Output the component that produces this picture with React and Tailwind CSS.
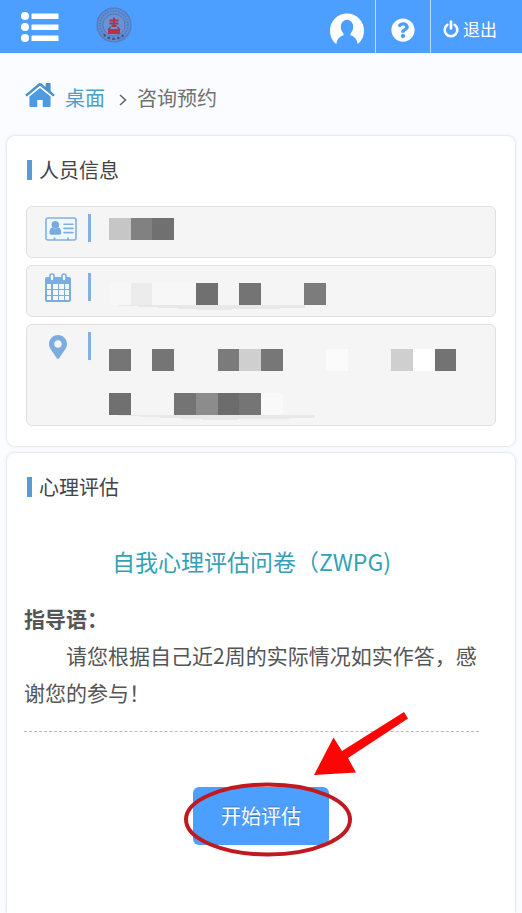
import React from "react";
import { FaQuestionCircle, FaMapMarkerAlt } from "react-icons/fa";

/* ================= ICONS ================= */

const ListIcon = () => (
  <svg viewBox="0 0 38 30" className="w-[38px] h-[30px]" fill="#fff" aria-hidden="true">
    {[4, 15, 26].map((y) => (
      <g key={y}>
        <circle cx="4" cy={y} r="4" />
        <rect x="10.500" y={y - 2.5} width="27" height="5.500" rx="0.500" />
      </g>
    ))}
  </svg>
);

const Emblem = () => (
  <svg viewBox="0 0 36 36" className="w-9 h-9" fill="none" aria-hidden="true">
    <circle cx="18" cy="18" r="17" fill="#5c8fd8" stroke="#5a78b4" strokeWidth="1.2" />
    <circle cx="18" cy="18" r="11" fill="#6b92d4" stroke="#5a78b4" strokeWidth="1" />
    <circle cx="18" cy="18" r="14" stroke="#5575b5" strokeWidth="1.6" strokeDasharray="1.2 1.6" />
    <path d="M8 27.500a13.800 13.800 0 0 0 20 0" stroke="#4a4a8c" strokeWidth="2.4" strokeDasharray="2.2 2.6" />
    <path d="M18 10.500v3M13.500 13.500h9M13.500 16.500h9M18 13v6M15.500 19h5" stroke="#a8364f" strokeWidth="1.900" />
    <path d="M12 22h12v5H12z" fill="#c62c40" />
    <path d="M14.500 20l-2.500 3M21.500 20l2.500 3" stroke="#8a3f6c" strokeWidth="1.4" />
  </svg>
);

const UserIcon = () => (
  <svg viewBox="0 0 36 34" className="w-9 h-[34px]" aria-hidden="true">
    <path
      fill="#fff"
      d="M7.3 32C3.2 29 1 24 1 18.5a17 17 0 1 1 34 0C35 24 32.8 29 28.7 32
      C28 27.6 26 24.6 21.4 23.2C21.2 22.4 21.4 21.6 22 20.9C23.4 19.5 24.2 17.4 24.2 14.6
      A6.2 6.8 0 0 0 11.8 14.6C11.8 17.4 12.6 19.5 14 20.9C14.6 21.6 14.8 22.4 14.6 23.2C10 24.6 8 27.6 7.3 32Z"
    />
  </svg>
);

const PowerIcon = () => (
  <svg viewBox="0 0 16 18" className="w-4 h-[18px]" fill="none" stroke="#fff" strokeLinecap="round" aria-hidden="true">
    <path d="M8 1.500v7" strokeWidth="2.600" />
    <path d="M4.400 4.800a6.300 6.300 0 1 0 7.200 0" strokeWidth="2.600" />
  </svg>
);

const HomeIcon = () => (
  <svg viewBox="0 0 30 26" className="w-[30px] h-[26px]" aria-hidden="true">
    <path fill="#4f9be2" d="M15 6L4.400 14.600v9.200c0 .6.4 1.100 1.100 1.100h6.800v-7h5.400v7h6.800c.7 0 1.100-.5 1.100-1.100v-9.200z" />
    <path
      fill="#4a93c9"
      d="M1.2 14.1L.5 13.300c-.2-.3-.2-.7.1-.9L13.200 1.700c1-.8 2.600-.8 3.600 0L20.600 4.900V1.600c0-.4.3-.7.7-.7h3.6c.4 0 .7.3.7.7v7.400l3.800 3.400c.3.2.3.6.1.9l-.7.8c-.3.3-.7.3-1 .1L15.400 4a.7.700 0 0 0-.8 0L2.200 14.200c-.3.2-.7.2-1-.1z"
    />
  </svg>
);

const IdCardIcon = () => (
  <svg viewBox="0 0 32 24" className="w-8 h-6" fill="none" aria-hidden="true">
    <rect x="1" y="1" width="30" height="22" rx="2" fill="#eef9ff" stroke="#84b0df" strokeWidth="1.600" />
    <circle cx="10.300" cy="7.800" r="3.800" fill="#78abdf" />
    <path d="M4.400 15.600c0-3.600 1.600-5.200 3.400-5.200 1.400 1.300 3.600 1.300 5 0 1.800 0 3.400 1.600 3.400 5.200 0 1.400-.8 2.200-1.900 2.200H6.300c-1.100 0-1.900-.8-1.900-2.200z" fill="#78abdf" />
    <path d="M19 7.200h9M19 11.400h9M19 15.600h9" stroke="#84b0df" strokeWidth="1.600" strokeLinecap="round" />
    <path d="M9.500 20.500V23M23 20.500V23" stroke="#84b0df" strokeWidth="1.800" />
  </svg>
);

const CalendarIcon = () => (
  <svg viewBox="0 0 26 29" className="w-[26px] h-[29px]" aria-hidden="true">
    <rect x="0" y="4" width="26" height="25" rx="2" fill="#7dade0" />
    <g fill="#f4fbff">
      {[11, 17, 23].map((y) =>
        [2, 8, 14, 20].map((x) => (
          <rect key={`${x}-${y}`} x={x} y={y} width={x === 8 || x === 14 ? 5 : 4} height={y === 23 ? 4 : 5} />
        ))
      )}
    </g>
    <rect x="5" y="1" width="4" height="7" rx="2" fill="#f4fbff" stroke="#7dade0" strokeWidth="1.6" />
    <rect x="17" y="1" width="4" height="7" rx="2" fill="#f4fbff" stroke="#7dade0" strokeWidth="1.6" />
  </svg>
);

/* ================= MASKED TEXT ================= */

// cells: [column, row offset, colour], smear: [y, width] of the pale streak below
const Mask = ({ cells, rows, smear }) => (
  <svg
    viewBox={`0 0 348 ${rows}`}
    className="w-[348px] max-w-full shrink-0"
    shapeRendering="crispEdges"
    role="img"
    aria-label="已隐藏"
  >
    {smear && <path d={`M0 ${smear[0]}h${smear[1]}v3l-${smear[1] / 2} 2z`} fill="#e8e8e8" />}
    {cells.map(([col, y, fill]) => (
      <rect key={`${col}-${y}`} x={col * 21.7} y={y} width="21.8" height="22" fill={fill} />
    ))}
  </svg>
);

const people = [
  {
    name: "姓名",
    icon: <IdCardIcon />,
    pad: "pt-[3px]",
    maskPad: "pt-1",
    rows: 22,
    cells: [[0, 0, "#c6c6c6"], [1, 0, "#818181"], [2, 0, "#707070"]],
  },
  {
    name: "日期",
    icon: <CalendarIcon />,
    pad: "pt-0",
    maskPad: "pt-[10px]",
    rows: 28,
    smear: [22, 196],
    cells: [
      [0, 0, "#f7f7f7"], [1, 0, "#ececec"], [2, 0, "#f7f7f7"], [3, 0, "#f7f7f7"],
      [4, 0, "#707070"], [6, 0, "#747474"], [9, 0, "#7c7c7c"],
    ],
  },
  {
    name: "地址",
    icon: <FaMapMarkerAlt className="w-[26px] h-6 text-[#7dade0]" />,
    pad: "pt-[3px]",
    maskPad: "pt-[17px]",
    rows: 72,
    smear: [66, 206],
    cells: [
      [0, 0, "#757575"], [2, 0, "#757575"], [5, 0, "#7b7b7b"], [6, 0, "#cfcfcf"], [7, 0, "#777777"],
      [10, 0, "#fbfbfb"], [13, 0, "#cfcfcf"], [14, 0, "#ffffff"], [15, 0, "#737373"],
      [0, 44, "#707070"], [3, 44, "#747474"], [4, 44, "#8c8c8c"], [5, 44, "#6c6c6c"], [6, 44, "#757575"],
      [7, 44, "#f9f9f9"],
    ],
  },
];

const SectionTitle = ({ children }) => (
  <h2 className="flex items-center gap-[7px] text-[20px] leading-[30px] text-[#444]">
    <span className="w-[5px] h-5 bg-[#5b9bd5]" />
    {children}
  </h2>
);

const App = () => {
  return (
    <div className="min-h-screen flex flex-col bg-[#fafcff] font-['Noto_Sans_CJK_SC',sans-serif] text-[#555]">

      {/* ================= HEADER ================= */}
      <header className="flex items-stretch h-[53px] bg-[#4d9fff] text-white">
        <button type="button" aria-label="菜单" className="pl-[21px] pr-[37px]">
          <ListIcon />
        </button>
        <a href="#home" aria-label="首页" className="flex items-center pb-[3px]">
          <Emblem />
        </a>

        <div className="ml-auto flex">
          <button type="button" aria-label="用户" className="px-[10px] pt-[5px]">
            <UserIcon />
          </button>
          <button type="button" aria-label="帮助" className="px-[15px] pt-[7px] border-l border-[#b8dbff]">
            <FaQuestionCircle className="w-6 h-6" />
          </button>
          <button
            type="button"
            className="flex items-center gap-1 pl-3 pr-[25px] pt-[5px] border-l border-[#b8dbff] text-[17px]"
          >
            <PowerIcon />
            退出
          </button>
        </div>
      </header>

      {/* ================= BREADCRUMB ================= */}
      <nav className="flex items-center h-[83px] pl-[25px] pt-[6px] text-[20px]">
        <a href="#desktop" className="flex items-center gap-[10px] text-[#4a9fc9]">
          <span className="pb-[6px]">
            <HomeIcon />
          </span>
          桌面
        </a>
        <svg viewBox="0 0 8 12" className="w-2 h-3 ml-[14px] mr-[10px] mt-1" fill="none" aria-hidden="true">
          <path d="M1 1l5.500 5L1 11" stroke="#666" strokeWidth="1.6" />
        </svg>
        <span className="text-[#707070]">咨询预约</span>
      </nav>

      <main className="flex-1 flex flex-col gap-[7px] px-[7px]">

        {/* ================= PERSON INFO ================= */}
        <section className="rounded-lg bg-white px-[19px] pt-[19px] pb-5 shadow-[0_0_3px_rgba(90,110,130,0.3)]">
          <div className="pl-[1px]">
            <SectionTitle>人员信息</SectionTitle>
          </div>
          <ul className="flex flex-col gap-[7px] mt-[21px]">
            {people.map((item) => (
              <li
                key={item.name}
                className="flex items-start min-h-[52px] pl-[18px] pt-[7px] pb-1 rounded-md border border-[#e0e0e0] bg-[#f5f5f5]"
              >
                <span className={`w-[43px] shrink-0 ${item.pad}`}>{item.icon}</span>
                <span className="w-[3px] h-7 mr-[18px] shrink-0 bg-[#84b0df]" />
                <span className={`flex-1 min-w-0 ${item.maskPad}`}>
                  <Mask cells={item.cells} rows={item.rows} smear={item.smear} />
                </span>
              </li>
            ))}
          </ul>
        </section>

        {/* ================= ASSESSMENT ================= */}
        <section className="flex-1 rounded-t-lg bg-white pt-[19px] pb-[68px] shadow-[0_0_3px_rgba(90,110,130,0.3)]">
          <div className="pl-5">
            <SectionTitle>心理评估</SectionTitle>
          </div>

          <div className="ml-[17px] mr-9 pb-5 border-b border-dashed border-[#bbb]">
            <h3 className="mt-[41px] text-center text-[23px] leading-9 text-[#36a0b6]">
              自我心理评估问卷（ZWPG)
            </h3>
            <p className="mt-[21px] text-[21px] leading-[37px] font-bold">指导语：</p>
            <p className="indent-[2em] text-[21px] leading-[37px]">
              请您根据自己近2周的实际情况如实作答，感谢您的参与！
            </p>
          </div>

          <div className="flex justify-center mt-[55px]">
            <div className="relative">
              <button
                type="button"
                className="px-7 h-[58px] rounded-md bg-[#4d9fff] text-[20px] text-white [text-shadow:0_-1px_0_rgba(0,0,0,0.25)]"
              >
                开始评估
              </button>

              {/* pointer and ring drawn over the button */}
              <svg
                viewBox="0 0 230 150"
                className="absolute -left-[10px] -top-[79px] w-[230px] h-[150px] max-w-none pointer-events-none"
                fill="none"
                aria-hidden="true"
              >
                <ellipse cx="85" cy="111.500" rx="82" ry="35" stroke="#c01920" strokeWidth="4" />
                <path d="M131 67l19.500-37.500 8.500 13.500L221 4l4 6.500L165 50l8 14.500z" fill="#fb0505" />
              </svg>
            </div>
          </div>
        </section>

      </main>
    </div>
  );
};

export default App;
